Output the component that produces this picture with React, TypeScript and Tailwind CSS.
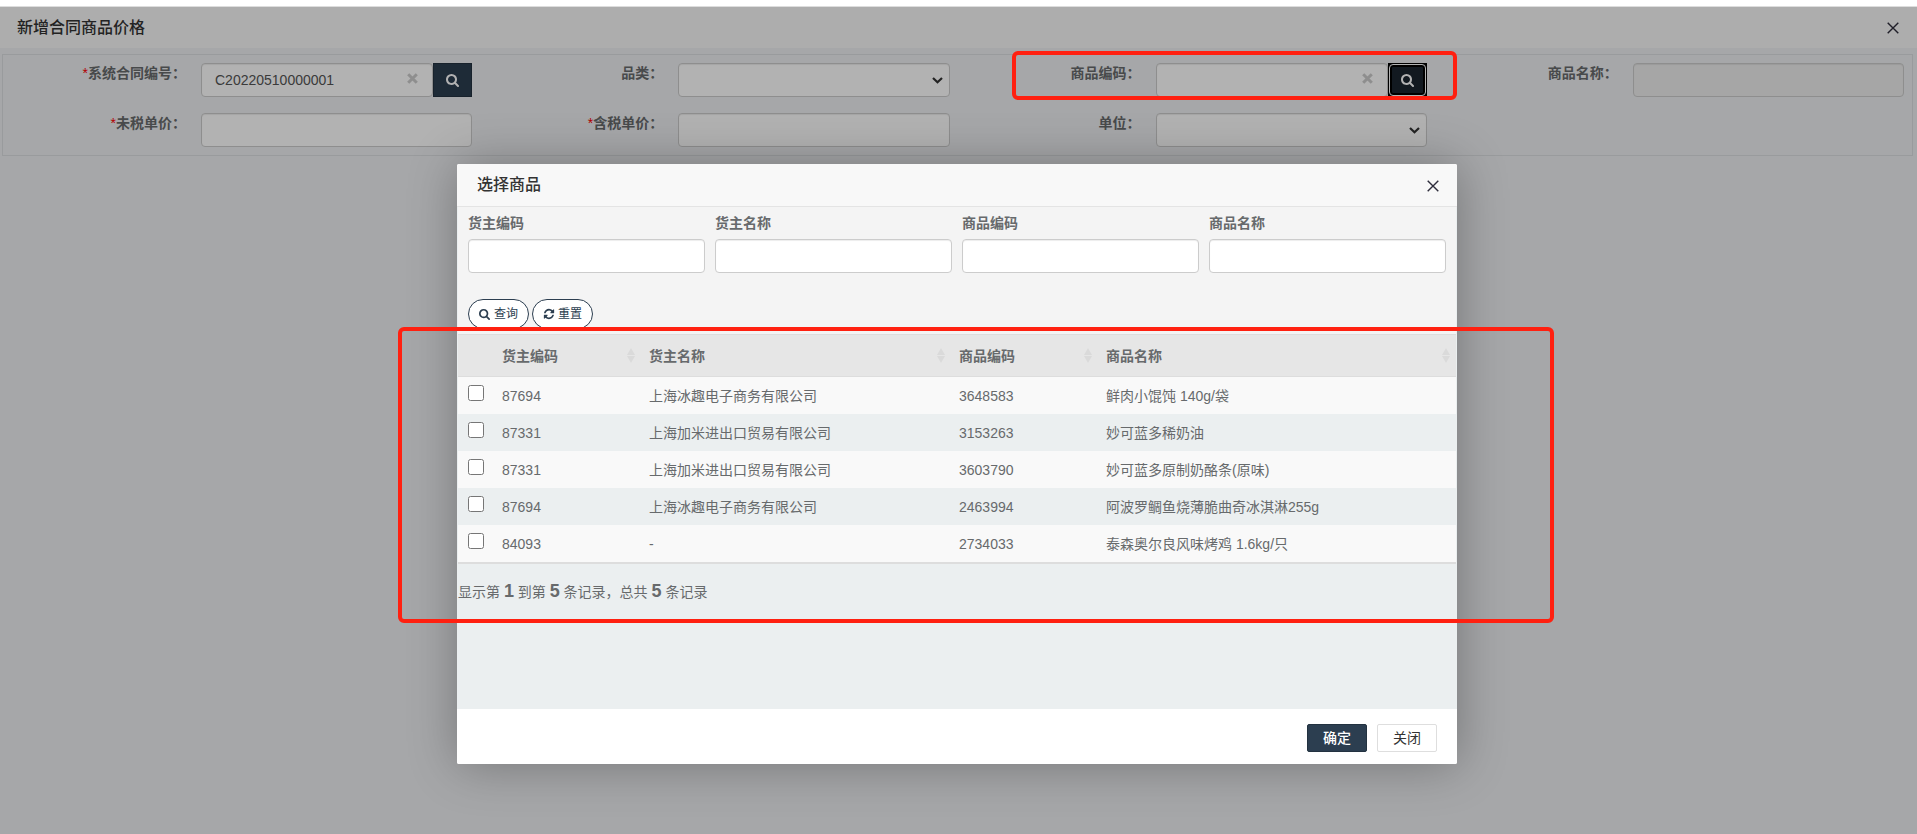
import React from 'react';

function SearchIcon({ className }: { className: string }) {
  return (
    <svg viewBox="0 0 1664 1792" fill="currentColor" className={className} aria-hidden="true">
      <path d="M1152 832q0-185-131.5-316.5t-316.5-131.5-316.5 131.5-131.5 316.5 131.5 316.5 316.5 131.5 316.5-131.5 131.5-316.5zm512 832q0 52-38 90t-90 38q-54 0-90-38l-343-342q-179 124-399 124-143 0-273.5-55.5t-225-150-150-225-55.5-273.5 55.5-273.5 150-225 225-150 273.5-55.5 273.5 55.5 225 150 150 225 55.5 273.5q0 220-124 399l343 343q37 37 37 90z" />
    </svg>
  );
}

function RefreshIcon({ className }: { className: string }) {
  return (
    <svg viewBox="0 0 1792 1792" fill="currentColor" className={className} aria-hidden="true">
      <path d="M1639 1056q0 5-1 7-64 268-268 434.5t-478 166.5q-146 0-282.5-55t-243.5-157l-129 129q-19 19-45 19t-45-19-19-45v-448q0-26 19-45t45-19h448q26 0 45 19t19 45-19 45l-137 137q71 66 161 102t187 36q134 0 250-65t186-179q11-17 53-117 8-23 30-23h192q13 0 22.5 9.5t9.5 22.5zm25-800v448q0 26-19 45t-45 19h-448q-26 0-45-19t-19-45 19-45l138-138q-148-137-349-137-134 0-250 65t-186 179q-11 17-53 117-8 23-30 23h-199q-13 0-22.5-9.5t-9.5-22.5v-7q65-268 270-434.5t480-166.5q146 0 284 55.5t245 156.5l130-129q19-19 45-19t45 19 19 45z" />
    </svg>
  );
}

function CloseIcon({ className }: { className: string }) {
  return (
    <svg viewBox="0 0 12 12" fill="none" stroke="currentColor" strokeWidth="1.4" className={className} aria-hidden="true">
      <path d="M0.7 0.7 11.3 11.3M11.3 0.7 0.7 11.3" />
    </svg>
  );
}

function SortIcon() {
  return (
    <svg viewBox="0 0 8 15" fill="#dadada" className="h-[15px] w-2 shrink-0" aria-hidden="true">
      <path d="M4 0 8 7H0zM4 15 0 8h8z" />
    </svg>
  );
}

const control = 'h-[34px] w-full min-w-0 rounded border border-[#ccc] px-[13px] text-sm text-[#555] shadow-[inset_0_1px_1px_rgba(0,0,0,0.075)]';

type FieldProps = { id: string; label: string; required?: boolean; children: React.ReactNode };

function Field({ id, label, required, children }: FieldProps) {
  return (
    <div className="grid grid-cols-[198px_minmax(0,1fr)] pr-2">
      <label htmlFor={id} className="pr-[15px] text-right text-sm leading-5 font-bold text-[#676a6c]">
        {required && <span className="font-normal text-[#f00]">*</span>}
        {label}：
      </label>
      {children}
    </div>
  );
}

function SelectBox({ id }: { id: string }) {
  return (
    <div className="relative">
      <select id={id} className={`${control} appearance-none bg-white`} />
      <svg viewBox="0 0 11 7" fill="none" stroke="#333" strokeWidth="2.2" className="pointer-events-none absolute top-3.5 right-[7px] h-[7px] w-[11px]" aria-hidden="true">
        <path d="M1 1 5.5 5.3 10 1" />
      </svg>
    </div>
  );
}

function LookupInput({ id, value, focused }: { id: string; value: string; focused?: boolean }) {
  return (
    <div className="flex">
      <div className="relative min-w-0 flex-1">
        <input id={id} defaultValue={value} className={`${control} bg-white`} />
        <button type="button" aria-label="清除" className="absolute top-2.5 right-[15px] text-[#ccc]">
          <svg viewBox="0 0 11 11" stroke="currentColor" strokeWidth="3" className="size-[11px]" aria-hidden="true">
            <path d="M1.2 1.2 9.8 9.8M9.8 1.2 1.2 9.8" />
          </svg>
        </button>
      </div>
      {focused ? (
        <button type="button" aria-label="查找" className="h-[34px] w-[39px] shrink-0 bg-black p-px">
          <span className="flex size-full items-center justify-center rounded border border-white bg-[#1a242f] text-white shadow-[inset_0_0_0_2px_black]">
            <SearchIcon className="h-3.5 w-[13px]" />
          </span>
        </button>
      ) : (
        <button type="button" aria-label="查找" className="flex h-[34px] w-[39px] shrink-0 items-center justify-center border border-[#233240] bg-[#2c3e50] text-white">
          <SearchIcon className="h-3.5 w-[13px]" />
        </button>
      )}
    </div>
  );
}

const goods = [
  ['87694', '上海冰趣电子商务有限公司', '3648583', '鲜肉小馄饨 140g/袋'],
  ['87331', '上海加米进出口贸易有限公司', '3153263', '妙可蓝多稀奶油'],
  ['87331', '上海加米进出口贸易有限公司', '3603790', '妙可蓝多原制奶酪条(原味)'],
  ['87694', '上海冰趣电子商务有限公司', '2463994', '阿波罗鲷鱼烧薄脆曲奇冰淇淋255g'],
  ['84093', '-', '2734033', '泰森奥尔良风味烤鸡 1.6kg/只'],
];

const headings = ['货主编码', '货主名称', '商品编码', '商品名称'];
const columnWidths = ['w-[147px]', 'w-[310px]', 'w-[147px]', ''];

function GoodsDialog() {
  return (
    <section
      role="dialog"
      aria-label="选择商品"
      className="flex h-[600px] w-[1000px] flex-col overflow-hidden rounded-xs bg-white text-sm text-[#676a6c] shadow-[1px_1px_50px_rgba(0,0,0,0.3)]"
    >
      <header className="flex h-[43px] shrink-0 items-center justify-between border-b border-[#e4e4e4] bg-[#f8f8f8] pr-4 pl-5">
        <h2 className="text-base leading-6 font-medium text-[#333]">选择商品</h2>
        <button type="button" aria-label="关闭窗口" className="pt-0.5 pr-0.5 text-[#2e2d3c]">
          <CloseIcon className="size-3" />
        </button>
      </header>
      <div className="flex-1 bg-[#ebeff0] px-px">
        <form className="border-b border-[#ddd] bg-[#f4f4f4] px-2.5 pt-1.5 pb-[5px]" onSubmit={(e) => e.preventDefault()}>
          <div className="grid grid-cols-4 gap-x-2.5">
            {headings.map((h, i) => (
              <div key={h}>
                <label htmlFor={`q${i}`} className="mb-1.5 block leading-5 font-bold">
                  {h}
                </label>
                <input id={`q${i}`} className={`${control} bg-white`} />
              </div>
            ))}
          </div>
          <div className="mt-[26px] flex gap-[3px]">
            <button type="submit" className="flex h-[30px] items-center gap-1 rounded-full border border-[#2c3e50] bg-white px-2.5 text-xs text-[#2c3e50]">
              <SearchIcon className="h-3 w-[11px]" />
              查询
            </button>
            <button type="reset" className="flex h-[30px] items-center gap-[3px] rounded-full border border-[#2c3e50] bg-white px-2.5 text-xs text-[#2c3e50]">
              <RefreshIcon className="size-3" />
              重置
            </button>
          </div>
        </form>
        <table className="w-full table-fixed border-separate border-spacing-0 border-b-2 border-[#ddd] text-left">
          <thead>
            <tr className="bg-[#e6e6e6]">
              <th className="h-[42px] w-9 border-b border-[#ddd] p-0" />
              {headings.map((h, i) => (
                <th key={h} className={`border-b border-[#ddd] py-0 pr-1.5 pl-2 ${columnWidths[i]}`}>
                  <div className="flex items-center justify-between">
                    {h}
                    <SortIcon />
                  </div>
                </th>
              ))}
            </tr>
          </thead>
          <tbody>
            {goods.map((row, i) => (
              <tr key={row[2]} className="h-[37px] odd:bg-[#f9f9f9]">
                <td className="px-2.5 pt-2 pb-0 align-top">
                  <input type="checkbox" aria-label={`选择 ${row[2]}`} id={`r${i}`} className="block size-4" />
                </td>
                {row.map((cell, j) => (
                  <td key={j} className="px-2 py-0">
                    {cell}
                  </td>
                ))}
              </tr>
            ))}
          </tbody>
        </table>
        <p className="mt-[15px] leading-6">
          显示第 <b className="text-lg leading-6">1</b> 到第 <b className="text-lg leading-6">5</b> 条记录，总共 <b className="text-lg leading-6">5</b> 条记录
        </p>
      </div>
      <footer className="flex h-[55px] shrink-0 items-start justify-end gap-2.5 bg-white px-5 pt-[15px]">
        <button type="button" className="h-7 w-[60px] rounded-xs border border-[#233240] bg-[#2c3e50] font-medium text-white">
          确定
        </button>
        <button type="button" className="h-7 w-[60px] rounded-xs border border-[#dedede] bg-white text-[#333]">
          关闭
        </button>
      </footer>
    </section>
  );
}

export default function App() {
  return (
    <div className="min-h-screen bg-white pt-1.5 font-['Liberation_Sans','Noto_Sans_CJK_SC',sans-serif]">
      <main className="relative min-h-[calc(100vh-6px)] border-t border-[#ddd] bg-[#eef0f2]">
        <header className="flex h-[41px] items-center justify-between bg-[#f8f8f8] pr-[18px] pl-[17px]">
          <h1 className="text-base leading-6 font-medium text-[#333]">新增合同商品价格</h1>
          <button type="button" aria-label="关闭页面" className="text-[#2e2d3c]">
            <CloseIcon className="size-3" />
          </button>
        </header>
        <form className="mt-1.5 mr-1 ml-0.5 grid grid-cols-4 gap-y-4 border border-[#dcdfe1] py-2">
          <Field id="contract" label="系统合同编号" required>
            <LookupInput id="contract" value="C20220510000001" />
          </Field>
          <Field id="category" label="品类">
            <SelectBox id="category" />
          </Field>
          <Field id="goodsCode" label="商品编码">
            <LookupInput id="goodsCode" value="" focused />
          </Field>
          <Field id="goodsName" label="商品名称">
            <input id="goodsName" readOnly className={`${control} bg-[#eee]`} />
          </Field>
          <Field id="net" label="未税单价" required>
            <input id="net" className={`${control} bg-white`} />
          </Field>
          <Field id="gross" label="含税单价" required>
            <input id="gross" className={`${control} bg-white`} />
          </Field>
          <Field id="unit" label="单位">
            <SelectBox id="unit" />
          </Field>
        </form>
        <div className="absolute inset-0 flex items-start justify-center bg-black/30 pt-[157px] pr-[3px]">
          <GoodsDialog />
        </div>
      </main>
      <div className="pointer-events-none absolute top-[51px] left-[1012px] h-[49px] w-[445px] rounded-md border-4 border-[#ff2010]" />
      <div className="pointer-events-none absolute top-[327px] left-[398px] h-[296px] w-[1156px] rounded-md border-4 border-[#ff2010]" />
    </div>
  );
}
